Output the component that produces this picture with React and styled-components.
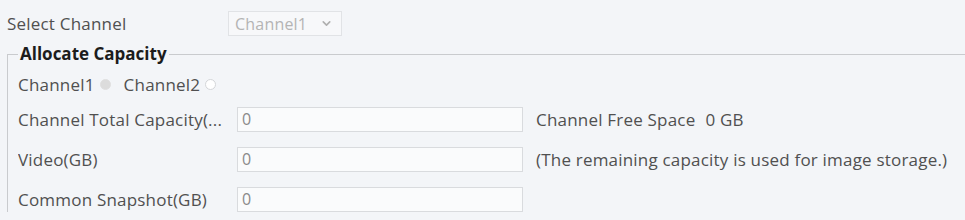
import styled, { createGlobalStyle } from "styled-components";
import { ChevronDown } from "lucide-react";

const GlobalStyle = createGlobalStyle`
  html, body {
    margin: 0;
    padding: 0;
    background-color: #f3f5f8;
    overflow: hidden;
  }
  body {
    font-family: "Open Sans", "Noto Sans", sans-serif;
    font-size: 17px;
    letter-spacing: 0.2px;
    color: #505050;
  }
`;

const Page = styled.div`
  padding: 11px 0 0 7px;
`;

const SelectRow = styled.div`
  display: flex;
  align-items: center;
  height: 25px;
`;

const Label = styled.div`
  width: ${(p) => p.width || 219}px;
  flex-shrink: 0;
  white-space: nowrap;
  overflow: hidden;
  box-sizing: border-box;
`;

const SelectBox = styled.div`
  display: flex;
  align-items: center;
  justify-content: space-between;
  width: 114px;
  height: 25px;
  box-sizing: border-box;
  padding: 0 8px 0 6px;
  border: 1px solid #e1e3e6;
  background-color: #f7f8fa;
  color: #b4b4b4;
  font-size: 16px;
`;

const Fieldset = styled.fieldset`
  margin: 7px 0 0 0;
  padding: 0 0 0 10px;
  border: none;
  border-top: 1px solid #c9cbce;
  border-left: 1px solid #c9cbce;
`;

const Legend = styled.legend`
  padding: 0 2px;
  font-weight: 700;
  color: #1c1c1c;
  line-height: 22px;
  letter-spacing: 0;
`;

const RadioRow = styled.div`
  display: flex;
  align-items: center;
  height: 20px;
  margin-top: 9px;
`;

const RadioItem = styled.label`
  display: flex;
  align-items: center;
  margin-right: 13px;
`;

const RadioDot = styled.span`
  display: inline-block;
  width: 11px;
  height: 11px;
  border-radius: 50%;
  margin-left: 5px;
  box-sizing: border-box;
  border: 1px solid ${(p) => (p.checked ? "#e0e0e0" : "#d4d6d9")};
  background-color: ${(p) => (p.checked ? "#dcdcdc" : "#ffffff")};
`;

const Rows = styled.div`
  display: flex;
  flex-direction: column;
  gap: 15px;
  margin-top: 13px;
`;

const FieldRow = styled.div`
  display: flex;
  align-items: center;
  height: 25px;
`;

const Input = styled.div`
  width: 286px;
  height: 25px;
  box-sizing: border-box;
  border: 1px solid #d9dbde;
  background-color: #fafbfc;
  color: #8a8a8a;
  padding-left: 4px;
  line-height: 23px;
  font-size: 16px;
`;

const Note = styled.span`
  margin-left: 13px;
  white-space: nowrap;
`;

const Value = styled.span`
  margin-left: 10px;
`;

const App = () => {
  return (
    <>
      <GlobalStyle />
      <Page>
        <SelectRow>
          <Label width={221}>Select Channel</Label>
          <SelectBox>
            Channel1
            <ChevronDown size={13} strokeWidth={3} color="#b0b0b0" />
          </SelectBox>
        </SelectRow>
        <Fieldset>
          <Legend>Allocate Capacity</Legend>
          <RadioRow>
            <RadioItem>
              Channel1
              <RadioDot checked />
            </RadioItem>
            <RadioItem>
              Channel2
              <RadioDot />
            </RadioItem>
          </RadioRow>
          <Rows>
            <FieldRow>
              <Label>Channel Total Capacity(...</Label>
              <Input>0</Input>
              <Note>
                Channel Free Space<Value>0 GB</Value>
              </Note>
            </FieldRow>
            <FieldRow>
              <Label>Video(GB)</Label>
              <Input>0</Input>
              <Note>(The remaining capacity is used for image storage.)</Note>
            </FieldRow>
            <FieldRow>
              <Label>Common Snapshot(GB)</Label>
              <Input>0</Input>
            </FieldRow>
          </Rows>
        </Fieldset>
      </Page>
    </>
  );
};

export default App;
